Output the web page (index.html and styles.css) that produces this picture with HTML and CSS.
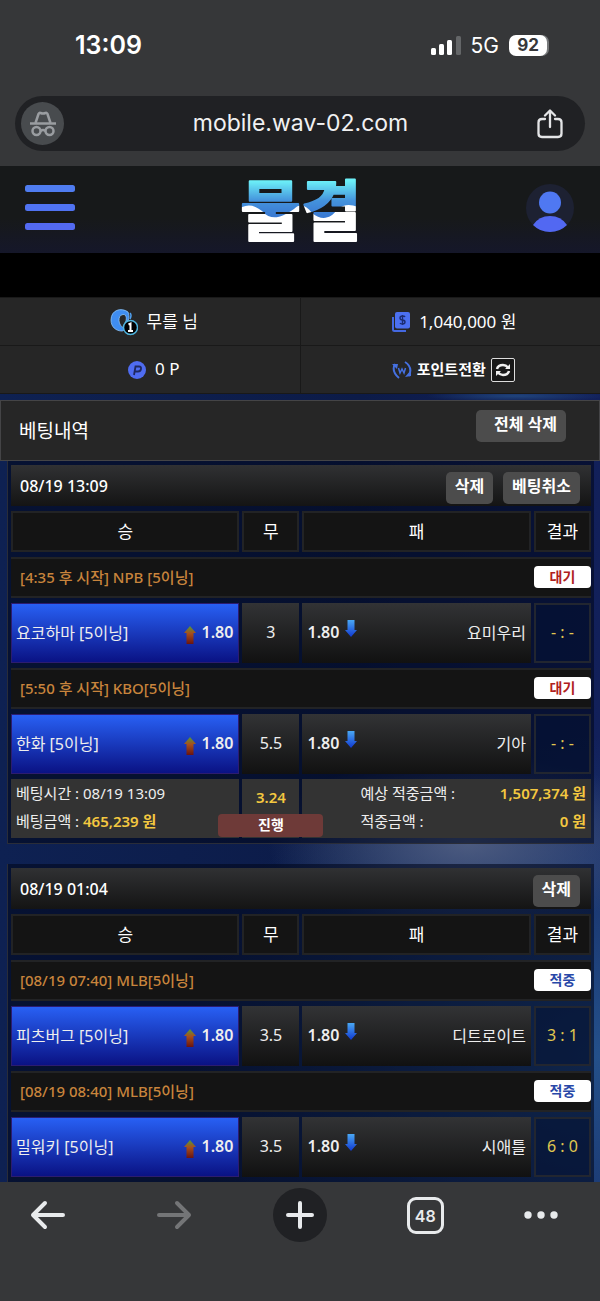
FILE: index.html
```
<!DOCTYPE html>
<html lang="ko">
<head>
  <meta charset="UTF-8">
  <meta name="viewport" content="width=device-width, initial-scale=1.0">
  <title>베팅내역</title>
  <link rel="stylesheet" href="styles.css">
</head>
<body>
  <svg class="defs" width="0" height="0" aria-hidden="true">
    <defs>
      <linearGradient id="g-up" x1="0" y1="0" x2="0" y2="1">
        <stop offset="0" stop-color="#4f9a3c"/>
        <stop offset="0.4" stop-color="#a8501c"/>
        <stop offset="1" stop-color="#6a1410"/>
      </linearGradient>
      <linearGradient id="g-down" x1="0" y1="0" x2="0" y2="1">
        <stop offset="0" stop-color="#4aa8f4"/>
        <stop offset="1" stop-color="#1038d0"/>
      </linearGradient>
      <symbol id="up" viewBox="0 0 12 18">
        <path d="M6 0 L12 7 H9.5 V18 H2.5 V7 H0 Z" fill="url(#g-up)"/>
      </symbol>
      <symbol id="down" viewBox="0 0 12 17">
        <path d="M2.5 0 H9.5 V10 H12 L6 17 L0 10 H2.5 Z" fill="url(#g-down)"/>
      </symbol>
    </defs>
  </svg>

  <div class="statusbar">
    <span class="clock">13:09</span>
    <div class="signals">
      <svg width="30" height="20" viewBox="0 0 30 20">
        <rect x="0" y="13" width="5" height="7" rx="1.5" fill="#fff"/>
        <rect x="8" y="9" width="5" height="11" rx="1.5" fill="#fff"/>
        <rect x="16" y="5" width="5" height="15" rx="1.5" fill="#fff"/>
        <rect x="25" y="1" width="5" height="19" rx="1.5" fill="#646668"/>
      </svg>
      <span class="net">5G</span>
      <span class="battery">92</span>
    </div>
  </div>

  <div class="addressbar">
    <button class="incognito" aria-label="시크릿 모드">
      <svg width="28" height="26" viewBox="0 0 28 26" fill="none" stroke="#9a9da1" stroke-width="2.5">
        <path d="M1 12.5 H27"/>
        <path d="M6.5 12 L9.5 3 Q10 1.5 11.5 2 Q14 3 16.5 2 Q18 1.5 18.5 3 L21.5 12"/>
        <circle cx="7.5" cy="20" r="4"/>
        <circle cx="20.5" cy="20" r="4"/>
        <path d="M11.5 20 Q14 18 16.5 20"/>
      </svg>
    </button>
    <span class="url">mobile.wav-02.com</span>
    <button class="share" aria-label="공유">
      <svg width="26" height="30" viewBox="0 0 26 30" fill="none" stroke="#e4e5e7" stroke-width="2.3" stroke-linecap="round" stroke-linejoin="round">
        <path d="M8 10 H5 Q1.5 10 1.5 13.5 V24.5 Q1.5 28 5 28 H21 Q24.5 28 24.5 24.5 V13.5 Q24.5 10 21 10 H18"/>
        <path d="M13 18 V2 M8 6.5 L13 1.5 L18 6.5"/>
      </svg>
    </button>
  </div>

  <header class="site-header">
    <button class="menu" aria-label="메뉴">
      <svg width="50" height="46" viewBox="0 0 50 46">
        <rect x="0" y="0" width="50" height="7" rx="2.5" fill="#4f7cf0"/>
        <rect x="0" y="19" width="50" height="7" rx="2.5" fill="#5073f2"/>
        <rect x="0" y="38" width="50" height="7" rx="2.5" fill="#536af2"/>
      </svg>
    </button>
    <a class="logo" href="#" aria-label="물결">
      <svg width="132" height="83" viewBox="0 0 132 83">
        <defs>
          <linearGradient id="g-logo" x1="0" y1="0" x2="0" y2="1">
            <stop offset="0.18" stop-color="#6cf0f8"/>
            <stop offset="0.42" stop-color="#4492dc"/>
            <stop offset="0.6" stop-color="#3a7ad2"/>
          </linearGradient>
          <pattern id="wave" patternUnits="userSpaceOnUse" width="132" height="83">
            <rect width="132" height="83" fill="url(#g-logo)"/>
            <path d="M0 46 C10 37 18 38 27 45 C37 56 47 51 59 43 C65 37 71 39 77 47 C87 55 95 53 103 43 C111 36 121 39 132 45 V83 H0 Z" fill="#fff"/>
          </pattern>
        </defs>
        <text class="logo-text" x="66" y="69" text-anchor="middle" fill="url(#wave)" stroke="url(#wave)">물결</text>
      </svg>
    </a>
    <button class="user" aria-label="내 정보">
      <svg width="48" height="48" viewBox="0 0 48 48">
        <circle cx="24" cy="24" r="24" fill="#1d2132"/>
        <circle cx="24" cy="18.5" r="11" fill="#4f78f2"/>
        <path d="M7 41 Q13 32 24 32 Q35 32 41 41 Q34 48 24 48 Q14 48 7 41 Z" fill="#5268f2"/>
      </svg>
    </button>
  </header>

  <div class="notice"></div>

  <section class="account">
    <div class="account-cell">
      <svg width="28" height="28" viewBox="0 0 28 28">
        <path d="M18 4 C11 -1 1 2 1 12 C1 19 6 23 12 23 C14 23 15 21 14 20 C8 18 7 7 13 6.5 C17 6 17 12 15 15 C19 13 20 9 18 4 Z" fill="#3f8df0" stroke="#8cc4f6" stroke-width="0.8"/>
        <path d="M20 5 Q22 7 20 11" fill="none" stroke="#4fa0f0" stroke-width="1.5"/>
        <circle cx="20.5" cy="19.5" r="7" fill="#000" stroke="#4fb4de" stroke-width="1.5"/>
        <path d="M18.5 16.5 L20.5 15.5 V23 M18 23 H23" fill="none" stroke="#fff" stroke-width="2"/>
      </svg>
      <span class="cash">무를 님</span>
    </div>
    <div class="account-cell">
      <svg width="18" height="20" viewBox="0 0 18 20">
        <path d="M1 5 V17.5 Q1 19 2.5 19 H14" fill="none" stroke="#4468e0" stroke-width="2"/>
        <rect x="3" y="0" width="15" height="16.5" rx="2" fill="#4c70f0"/>
        <path d="M13 5 Q12.5 4 10.5 4 Q8 4 8 6 Q8 7.8 10.5 8 Q13 8.2 13 10 Q13 12 10.5 12 Q8.5 12 8 11 M10.5 3 V13" fill="none" stroke="#1c2c70" stroke-width="1.4"/>
      </svg>
      <span class="cash">1,040,000 원</span>
    </div>
    <div class="account-cell">
      <svg width="18" height="18" viewBox="0 0 18 18">
        <circle cx="9" cy="9" r="9" fill="#4f6cf0"/>
        <path d="M6 14 L7.5 5.5 H11 Q13.5 5.5 13 8 Q12.5 10.5 10 10.5 H7" fill="none" stroke="#1f2860" stroke-width="1.8"/>
      </svg>
      <span class="cash">0 P</span>
    </div>
    <div class="account-cell exchange">
      <svg width="20" height="18" viewBox="0 0 20 18" fill="none" stroke="#4570e0" stroke-width="2">
        <path d="M3 3 Q-1 10 7 17"/>
        <path d="M13 1 Q21 6 17 15"/>
        <path d="M0 3 L6 3 L5 8 Z M13 16 L19 9 L19 15 Z" fill="#4570e0" stroke="none"/>
        <path d="M6.5 7 L8 12 L10 8 L12 12 L13.5 7" stroke-width="1.5"/>
      </svg>
      <span>포인트전환</span>
      <button class="refresh" aria-label="새로고침">
        <svg width="16" height="14" viewBox="0 0 16 14" fill="none" stroke="#eee" stroke-width="2.5">
          <path d="M2 6 Q3 2 8 2 Q11 2 13 4.5"/>
          <path d="M14 8 Q13 12 8 12 Q5 12 3 9.5"/>
          <path d="M15 1 V6 H10 Z M1 13 V8 H6 Z" fill="#eee" stroke="none"/>
        </svg>
      </button>
    </div>
  </section>

  <main>
    <div class="page-title">
      <h1>베팅내역</h1>
      <button class="btn btn-all">전체 삭제</button>
    </div>

    <section class="bet">
      <div class="bet-head">
        <h2>08/19 13:09</h2>
        <button class="btn">삭제</button>
        <button class="btn">베팅취소</button>
      </div>
      <table>
        <colgroup><col class="team"><col class="draw"><col class="team"><col class="draw"></colgroup>
        <thead>
          <tr><th>승</th><th>무</th><th>패</th><th>결과</th></tr>
        </thead>
        <tbody>
          <tr class="league">
            <td colspan="4"><div class="line"><span>[4:35 후 시작] NPB [5이닝]</span><b class="state wait">대기</b></div></td>
          </tr>
          <tr class="match">
            <td class="picked"><div class="line"><span>요코하마 [5이닝]</span><svg class="arrow-up"><use href="#up"/></svg><b>1.80</b></div></td>
            <td>3</td>
            <td><div class="line"><b>1.80</b><svg class="arrow-down"><use href="#down"/></svg><span class="away">요미우리</span></div></td>
            <td class="score">- : -</td>
          </tr>
          <tr class="league">
            <td colspan="4"><div class="line"><span>[5:50 후 시작] KBO[5이닝]</span><b class="state wait">대기</b></div></td>
          </tr>
          <tr class="match">
            <td class="picked"><div class="line"><span>한화 [5이닝]</span><svg class="arrow-up"><use href="#up"/></svg><b>1.80</b></div></td>
            <td>5.5</td>
            <td><div class="line"><b>1.80</b><svg class="arrow-down"><use href="#down"/></svg><span class="away">기아</span></div></td>
            <td class="score">- : -</td>
          </tr>
        </tbody>
        <tfoot>
          <tr>
            <td>
              <div>베팅시간 : 08/19 13:09</div>
              <div>베팅금액 : <b>465,239 원</b></div>
            </td>
            <td class="total"><b>3.24</b><span class="progress">진행</span></td>
            <td class="payout" colspan="2">
              <div class="line"><span>예상 적중금액 :</span><b>1,507,374 원</b></div>
              <div class="line"><span>적중금액 :</span><b>0 원</b></div>
            </td>
          </tr>
        </tfoot>
      </table>
    </section>

    <section class="bet">
      <div class="bet-head">
        <h2>08/19 01:04</h2>
        <button class="btn">삭제</button>
      </div>
      <table>
        <colgroup><col class="team"><col class="draw"><col class="team"><col class="draw"></colgroup>
        <thead>
          <tr><th>승</th><th>무</th><th>패</th><th>결과</th></tr>
        </thead>
        <tbody>
          <tr class="league">
            <td colspan="4"><div class="line"><span>[08/19 07:40] MLB[5이닝]</span><b class="state hit">적중</b></div></td>
          </tr>
          <tr class="match">
            <td class="picked"><div class="line"><span>피츠버그 [5이닝]</span><svg class="arrow-up"><use href="#up"/></svg><b>1.80</b></div></td>
            <td>3.5</td>
            <td><div class="line"><b>1.80</b><svg class="arrow-down"><use href="#down"/></svg><span class="away">디트로이트</span></div></td>
            <td class="score">3 : 1</td>
          </tr>
          <tr class="league">
            <td colspan="4"><div class="line"><span>[08/19 08:40] MLB[5이닝]</span><b class="state hit">적중</b></div></td>
          </tr>
          <tr class="match">
            <td class="picked"><div class="line"><span>밀워키 [5이닝]</span><svg class="arrow-up"><use href="#up"/></svg><b>1.80</b></div></td>
            <td>3.5</td>
            <td><div class="line"><b>1.80</b><svg class="arrow-down"><use href="#down"/></svg><span class="away">시애틀</span></div></td>
            <td class="score">6 : 0</td>
          </tr>
        </tbody>
      </table>
    </section>
  </main>

  <nav class="toolbar">
    <button aria-label="뒤로">
      <svg width="36" height="30" viewBox="0 0 36 30" fill="none" stroke="#e8eaec" stroke-width="4" stroke-linecap="round" stroke-linejoin="round">
        <path d="M33 15 H3 M15 3 L3 15 L15 27"/>
      </svg>
    </button>
    <button aria-label="앞으로">
      <svg width="36" height="30" viewBox="0 0 36 30" fill="none" stroke="#747577" stroke-width="4" stroke-linecap="round" stroke-linejoin="round">
        <path d="M3 15 H33 M21 3 L33 15 L21 27"/>
      </svg>
    </button>
    <button class="new-tab" aria-label="새 탭">
      <svg width="28" height="28" viewBox="0 0 28 28" fill="none" stroke="#e8eaec" stroke-width="4" stroke-linecap="round">
        <path d="M14 2 V26 M2 14 H26"/>
      </svg>
    </button>
    <button aria-label="탭 48개"><span class="tabs">48</span></button>
    <button class="more" aria-label="더보기">
      <svg width="34" height="8" viewBox="0 0 34 8" fill="#e8eaec">
        <circle cx="4" cy="4" r="3.7"/><circle cx="17" cy="4" r="3.7"/><circle cx="30" cy="4" r="3.7"/>
      </svg>
    </button>
  </nav>
</body>
</html>
```
FILE: styles.css
```
* {
  box-sizing: border-box;
}
body {
  margin: 0;
  min-height: 100vh;
  display: flex;
  flex-direction: column;
  background: #363739;
  color: #fff;
  font-family: "Noto Sans", "Noto Sans CJK KR", sans-serif;
  font-size: 16px;
}
h1, h2 {
  margin: 0;
}
button {
  padding: 0;
  border: 0;
  background: none;
  color: inherit;
  font: inherit;
}
svg {
  display: block;
  flex: none;
}
.defs {
  position: absolute;
}
b {
  font-weight: 600;
}

/* phone status bar and address bar */
.statusbar {
  height: 96px;
  padding: 0 53px 6px 75px;
  display: flex;
  align-items: center;
  justify-content: space-between;
  font-family: Inter, sans-serif;
}
.clock {
  font-size: 25px;
  font-weight: 600;
}
.signals {
  display: flex;
  align-items: center;
  gap: 10px;
}
.net {
  font-size: 21px;
}
.battery {
  width: 38px;
  height: 21px;
  border-radius: 7px;
  background: #fff;
  box-shadow: 2px 0 0 #77797b;
  color: #363739;
  font-size: 17px;
  font-weight: 700;
  line-height: 21px;
  text-align: center;
}
.addressbar {
  height: 55px;
  margin: 0 15px 15px;
  padding: 0 22px 0 6px;
  display: flex;
  align-items: center;
  justify-content: space-between;
  border-radius: 28px;
  background: #202124;
  font-family: Inter, sans-serif;
}
.incognito {
  width: 43px;
  height: 43px;
  display: grid;
  place-items: center;
  border-radius: 50%;
  background: #484b4e;
}
.url {
  padding-bottom: 2px;
  color: #f1f1f2;
  font-size: 23px;
}

/* site header */
.site-header {
  height: 87px;
  padding: 0 26px 4px 25px;
  display: flex;
  align-items: center;
  justify-content: space-between;
  background: linear-gradient(#17191a 60%, #15172a);
}
.logo svg {
  overflow: visible;
}
.logo-text {
  font-family: "Noto Sans CJK KR", sans-serif;
  font-size: 66px;
  font-weight: 700;
  stroke-width: 2px;
  stroke-linejoin: round;
}
.notice {
  height: 44px;
  background: #000;
}
.account {
  display: grid;
  grid-template-columns: 1fr 1fr;
  gap: 1px;
  padding: 1px 0;
  background: #191919;
}
.account-cell {
  height: 47px;
  display: flex;
  align-items: center;
  justify-content: center;
  gap: 9px;
  padding-left: 8px;
  background: #262626;
}
.account-cell span {
  padding-bottom: 3px;
}
.cash {
  font-size: 17px;
}
.exchange {
  gap: 5px;
  padding-left: 6px;
  font-size: 15px;
  font-weight: 600;
}
.refresh {
  width: 24px;
  height: 24px;
  display: grid;
  place-items: center;
  border: 1px solid #ddd;
  border-radius: 2px;
  background: #171717;
}

/* betting history */
main {
  flex: 1;
  padding-top: 6px;
  background:
    radial-gradient(ellipse 200px 90px at 78% 57%, #4c5b80, transparent),
    radial-gradient(ellipse 90px 6px at 86% 2px, #20447c, transparent),
    radial-gradient(ellipse 420px 320px at 100% 84%, #24508a, transparent),
    linear-gradient(90deg, #0e2152, #0c1b48 60%, #12205a);
}
.page-title {
  height: 61px;
  padding: 0 33px 0 18px;
  display: flex;
  align-items: center;
  border: 1px solid #444446;
  background: #262626;
}
.page-title h1 {
  flex: 1;
  padding-bottom: 2px;
  font-size: 19px;
  font-weight: 400;
}
.btn {
  height: 32px;
  padding: 0 9px 4px;
  border-radius: 5px;
  background: #4c4c4c;
  font-weight: 600;
  line-height: 28px;
}
.btn-all {
  margin-bottom: 9px;
  padding-left: 18px;
}
.bet {
  margin: 0 6px 0 7px;
  border: solid #2a2d38;
  border-width: 0 0 1px 1px;
  padding-top: 4px;
  background: rgba(2, 8, 30, 0.6);
}
.bet + .bet {
  margin-top: 20px;
  border-bottom: 0;
}
.bet-head {
  height: 41px;
  margin: 0 3px;
  padding: 4px 11px 0 9px;
  display: flex;
  align-items: center;
  gap: 10px;
  background: linear-gradient(#303133, #141414);
}
.bet-head h2 {
  flex: 1;
  padding-bottom: 4px;
  font-size: 16px;
  font-weight: 500;
}
table {
  width: 100%;
  table-layout: fixed;
  border-spacing: 3px 5px;
}
.team {
  width: 40%;
}
.draw {
  width: 10%;
}
th, td {
  padding: 0;
}
th {
  height: 41px;
  padding-bottom: 2px;
  border: 2px solid #222325;
  background: #141414;
  font-size: 17px;
  font-weight: 400;
}
.line {
  display: flex;
  align-items: center;
}
.line > span:first-child {
  flex: 1;
}
.league td {
  height: 41px;
  padding: 0 0 2px 9px;
  border: solid #222325;
  border-width: 2px 0;
  background: #141414;
  color: #c8843c;
  font-size: 15px;
  font-weight: 500;
}
.state {
  width: 57px;
  height: 22px;
  border-radius: 4px;
  background: #fff;
  font-size: 14px;
  line-height: 21px;
  text-align: center;
}
.wait {
  color: #b02020;
}
.hit {
  color: #2848a8;
}
.match td {
  height: 60px;
  padding: 0 5px 2px;
  background: linear-gradient(#323335, #111);
  color: #eee;
  text-align: center;
}
.match .picked {
  border: 1px solid #2c1c70;
  padding-left: 4px;
  background: linear-gradient(#2860f4, #0a1284);
  text-align: left;
}
.arrow-up {
  width: 12px;
  height: 18px;
  margin: 5px 6px 0 0;
}
.arrow-down {
  width: 12px;
  height: 17px;
  margin: 0 0 7px 6px;
}
.away {
  flex: 1;
  text-align: right;
}
.match .score {
  border: 2px solid #222630;
  background: rgba(4, 18, 52, 0.5);
  color: #e0c850;
}
tfoot td {
  height: 59px;
  padding: 0 5px 3px;
  background: #333;
  color: #eee;
  font-size: 15px;
  line-height: 28px;
}
tfoot b {
  color: #f4c840;
}
tfoot .total {
  position: relative;
  padding-bottom: 24px;
  text-align: center;
}
.progress {
  position: absolute;
  left: -24px;
  right: -24px;
  bottom: 1px;
  height: 23px;
  border-radius: 4px;
  background: #6e3a38;
  color: #fff;
  font-size: 14px;
  font-weight: 600;
  line-height: 22px;
}
tfoot .payout {
  padding-left: 58px;
}

/* browser toolbar */
.toolbar {
  height: 119px;
  padding: 6px 42px 0 21px;
  display: flex;
  align-items: flex-start;
  justify-content: space-between;
}
.toolbar button {
  width: 54px;
  height: 54px;
  display: grid;
  place-items: center;
}
.toolbar .more {
  width: 34px;
}
.new-tab {
  border-radius: 50%;
  background: #202124;
}
.tabs {
  width: 37px;
  height: 37px;
  border: 3px solid #e8eaec;
  border-radius: 9px;
  color: #e8eaec;
  font: 600 16px/32px Inter, sans-serif;
}
```
